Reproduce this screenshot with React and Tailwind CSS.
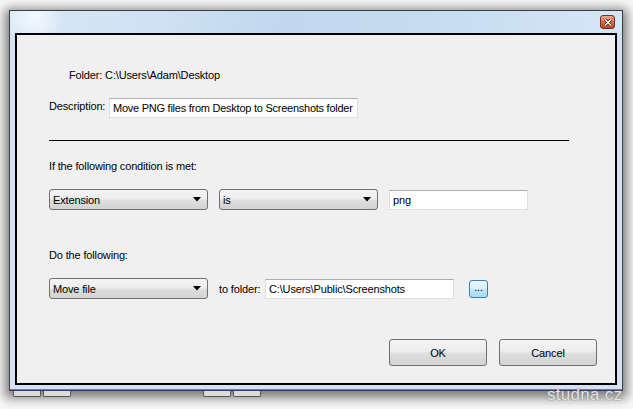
import React from 'react'

const font = { fontFamily: '"Liberation Sans", Arial, sans-serif' }

function Select({ value }) {
  return (
    <div className="flex h-[21px] w-[159px] items-center justify-between rounded-[3px] border border-[#707070] bg-[linear-gradient(to_bottom,#f4f4f4_0%,#ececec_48%,#dfdfdf_52%,#d2d2d2_100%)] pl-[3px] pr-[6px]">
      <span>{value}</span>
      <svg width="8" height="5" viewBox="0 0 8 5">
        <path d="M0 0 H8 L4 4.5 Z" fill="#000" />
      </svg>
    </div>
  )
}

function Field({ value, className }) {
  return (
    <div
      className={`flex h-[20px] items-center whitespace-nowrap border border-[#dbdfe6] border-t-[#abadb3] bg-white px-[3px] ${className}`}
    >
      {value}
    </div>
  )
}

function Button({ label }) {
  return (
    <div className="flex h-[27px] w-[98px] items-center justify-center rounded-[3px] border border-[#707070] bg-[linear-gradient(to_bottom,#f4f4f4_0%,#ececec_48%,#dfdfdf_52%,#d2d2d2_100%)]">
      {label}
    </div>
  )
}

export default function App() {
  return (
    <div
      className="relative h-[409px] w-[633px] overflow-hidden bg-[#f7f7f7] text-[11px] leading-[14px] tracking-[-0.15px] text-black"
      style={font}
    >
      <div className="ml-[9px] mt-[10px] flex h-[381px] w-[614px] flex-col border border-[#3a3f45] bg-[#d3e3f3] shadow-[0_3px_10px_4px_rgba(0,0,0,0.5)]">
        {/* title bar */}
        <div className="flex h-[22px] shrink-0 items-start justify-end bg-[radial-gradient(circle_at_4%_30%,#f4f9fe_0,transparent_30px),linear-gradient(100deg,#d7e7f6_0%,#cfe1f3_25%,#c0d7ee_45%,#c4dbf0_65%,#d5e6f6_100%)] pr-[7px] pt-[4px]">
          <div className="flex h-[14px] w-[15px] items-center justify-center rounded-[3px] border border-[#6b3428] bg-[linear-gradient(to_bottom,#eba38e_0%,#dd6a48_50%,#c6401e_100%)]">
            <svg width="8" height="7" viewBox="0 0 8 7">
              <path d="M1 0.5 L7 6.5 M7 0.5 L1 6.5" stroke="#2a1a16" strokeWidth="2.6" />
              <path d="M1 0.5 L7 6.5 M7 0.5 L1 6.5" stroke="#fff" strokeWidth="1.4" />
            </svg>
          </div>
        </div>
        {/* client area */}
        <div className="mx-[5px] mb-[4px] flex flex-1 flex-col border-2 border-black bg-[#f0f0f0] pl-[32px] pr-[18px]">
          <div className="mt-[33px] pl-[20px]">Folder: C:\Users\Adam\Desktop</div>

          <div className="mt-[16px] flex items-start">
            <span className="mt-[1px] w-[60px]">Description:</span>
            <Field
              value="Move PNG files from Desktop to Screenshots folder"
              className="w-[249px] tracking-[-0.25px]"
            />
          </div>

          <div className="mt-[22px] h-px w-[520px] bg-black" />

          <div className="mt-[18px]">If the following condition is met:</div>

          <div className="mt-[16px] flex items-center gap-[11px]">
            <Select value="Extension" />
            <Select value="is" />
            <Field value="png" className="w-[139px]" />
          </div>

          <div className="mt-[38px]">Do the following:</div>

          <div className="mt-[16px] flex items-center">
            <Select value="Move file" />
            <span className="ml-[11px] w-[46px]">to folder:</span>
            <Field value="C:\Users\Public\Screenshots" className="w-[189px]" />
            <div className="ml-[15px] flex h-[18px] w-[19px] items-center justify-center rounded-[3px] border border-[#3c7fb1] bg-[linear-gradient(to_bottom,#eaf6fd_0%,#d9f0fc_48%,#bee6fd_52%,#a7d9f5_100%)] pb-[3px]">
              ...
            </div>
          </div>

          <div className="mt-[40px] flex justify-end gap-[12px]">
            <Button label="OK" />
            <Button label="Cancel" />
          </div>
        </div>
        <div className="h-[1px] bg-[#1fa3c4]" />
      </div>

      {/* bits of windows beneath */}
      <div className="flex h-[6px]">
        <div className="ml-[13px] w-[28px] rounded-b-[2px] border border-t-0 border-[#555] bg-[#dcdcdc]" />
        <div className="ml-[2px] w-[28px] rounded-b-[2px] border border-t-0 border-[#555] bg-[#dcdcdc]" />
        <div className="ml-[132px] w-[28px] rounded-b-[2px] border border-t-0 border-[#555] bg-[#dcdcdc]" />
        <div className="ml-[2px] w-[28px] rounded-b-[2px] border border-t-0 border-[#555] bg-[#dcdcdc]" />
      </div>

      <div className="absolute left-[547px] top-[385px] text-[17px] leading-[20px] tracking-[0.3px] text-[#e4e4e4] [text-shadow:0_0_1px_#7a7a7a,0_0_1px_#7a7a7a]">
        studna.cz
      </div>
    </div>
  )
}
